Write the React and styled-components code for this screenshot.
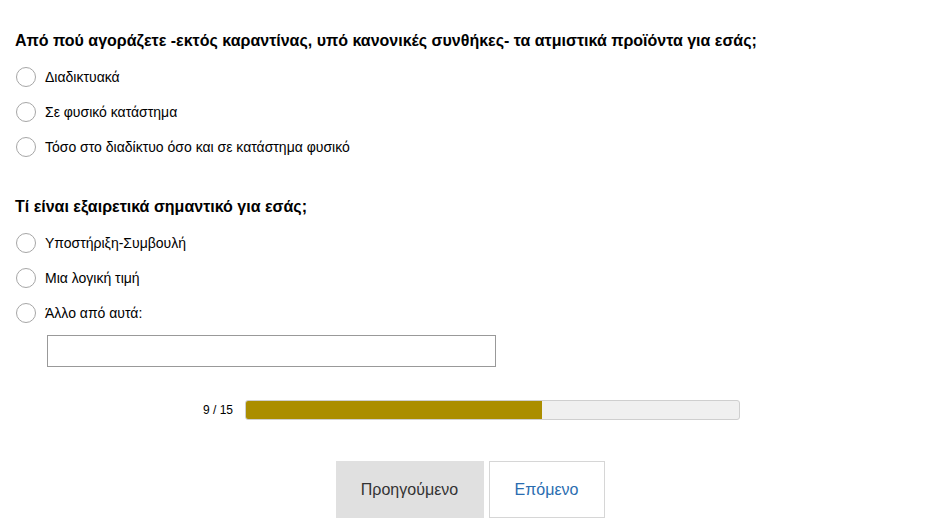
import React from 'react'
import styled, { createGlobalStyle } from 'styled-components'

const GlobalStyle = createGlobalStyle`
  body {
    margin: 0;
    background: #fff;
    font-family: "Liberation Sans", Arial, sans-serif;
    color: #000;
  }
`

const questions = [
  {
    title: 'Από πού αγοράζετε -εκτός καραντίνας, υπό κανονικές συνθήκες- τα ατμιστικά προϊόντα για εσάς;',
    options: ['Διαδικτυακά', 'Σε φυσικό κατάστημα', 'Τόσο στο διαδίκτυο όσο και σε κατάστημα φυσικό'],
  },
  {
    title: 'Τί είναι εξαιρετικά σημαντικό για εσάς;',
    options: ['Υποστήριξη-Συμβουλή', 'Μια λογική τιμή', 'Άλλο από αυτά:'],
    other: true,
  },
]

function App() {
  const current = 9
  const total = 15
  return (
    <Page>
      <GlobalStyle />
      {questions.map((q, qi) => (
        <Question key={qi} first={qi === 0}>
          <Title>{q.title}</Title>
          {q.options.map((opt) => (
            <Option key={opt}>
              <Radio />
              <Label>{opt}</Label>
            </Option>
          ))}
          {q.other && <OtherInput type="text" />}
        </Question>
      ))}

      <ProgressRow>
        <ProgressLabel>{current} / {total}</ProgressLabel>
        <Track>
          <Fill style={{ width: `${(current / total) * 100}%` }} />
        </Track>
      </ProgressRow>

      <ButtonTab>
        <PrevButton>Προηγούμενο</PrevButton>
        <NextButton>Επόμενο</NextButton>
      </ButtonTab>
    </Page>
  )
}

const Page = styled.div`
  padding: 31px 0 0 15px;
  width: 928px;
  box-sizing: border-box;
`

const Question = styled.div`
  margin-top: ${(p) => (p.first ? '0' : '32px')};
`

const Title = styled.div`
  font-size: 16px;
  font-weight: bold;
  line-height: 20px;
  margin-bottom: 8.5px;
`

const Option = styled.label`
  display: flex;
  align-items: center;
  height: 35px;
  cursor: pointer;
`

const Radio = styled.span`
  width: 18px;
  height: 18px;
  border: 1px solid #a6a6a6;
  border-radius: 50%;
  margin-left: 1px;
  box-sizing: content-box;
  flex-shrink: 0;
`

const Label = styled.span`
  font-size: 14px;
  margin-left: 9px;
`

const OtherInput = styled.input`
  display: block;
  margin: 5px 0 0 32px;
  width: 449px;
  height: 32px;
  box-sizing: border-box;
  border: 1px solid #999;
  outline: none;
  padding: 4px 8px;
`

const ProgressRow = styled.div`
  display: flex;
  align-items: center;
  justify-content: center;
  gap: 12px;
  margin-top: 33px;
`

const ProgressLabel = styled.span`
  font-size: 12px;
`

const Track = styled.div`
  width: 495px;
  height: 20px;
  box-sizing: border-box;
  background: #f0f0f0;
  border: 1px solid #cfcfcf;
  border-radius: 3px;
  overflow: hidden;
`

const Fill = styled.div`
  height: 100%;
  background: #ab8e00;
`

const ButtonTab = styled.div`
  display: flex;
  justify-content: center;
  gap: 5px;
  margin-top: 41px;
  padding-right: 3px;
`

const BaseButton = styled.button`
  height: 57px;
  font-family: "Liberation Sans", Arial, sans-serif;
  font-size: 16px;
  padding: 0 20px;
  cursor: pointer;
  box-shadow: 0 2px 0 #eaeaea;
`

const PrevButton = styled(BaseButton)`
  width: 148px;
  background: #e0e0e0;
  border: none;
  color: #333;
`

const NextButton = styled(BaseButton)`
  width: 116px;
  background: #fff;
  border: 1px solid #d6d6d6;
  color: #2a6db0;
`

export default App
